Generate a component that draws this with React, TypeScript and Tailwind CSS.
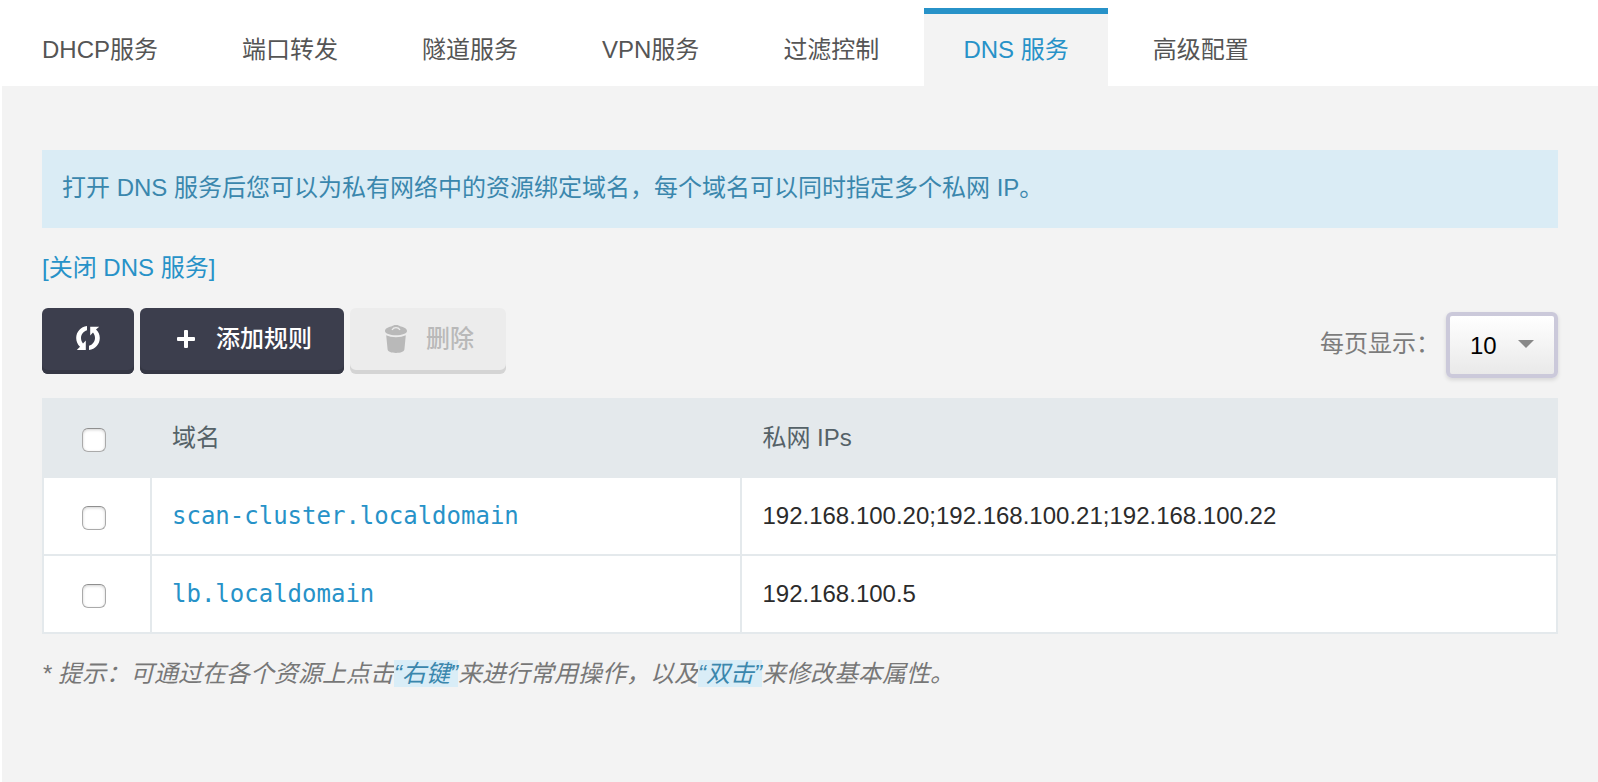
import { useState } from 'react';

interface DnsRule {
  id: string;
  domain: string;
  ips: string[];
}

const TABS = [
  { key: 'dhcp', label: 'DHCP服务' },
  { key: 'port', label: '端口转发' },
  { key: 'tunnel', label: '隧道服务' },
  { key: 'vpn', label: 'VPN服务' },
  { key: 'filter', label: '过滤控制' },
  { key: 'dns', label: 'DNS 服务' },
  { key: 'advanced', label: '高级配置' },
];

const RULES: DnsRule[] = [
  { id: 'scan', domain: 'scan-cluster.localdomain', ips: ['192.168.100.20', '192.168.100.21', '192.168.100.22'] },
  { id: 'lb', domain: 'lb.localdomain', ips: ['192.168.100.5'] },
];

function RefreshIcon() {
  return (
    <svg viewBox="0 0 24 24" className="w-6 h-6" fill="currentColor" aria-hidden="true">
      <path d="M11 0v4.200C7.400 5.200 5 8.500 5 12c0 2.200.8 4 2 5.500L9.800 14.500V24H.8l3.200-3.300C1.600 18.500.2 15.500.2 12 .2 5.800 4.800.8 11 0z" />
      <path d="M13 24v-4.200c3.600-1 6-4.300 6-7.800 0-2.200-.8-4-2-5.500l-2.800 3V.8h9L20 3.500c2.400 2.200 3.800 5 3.800 8.500 0 6.200-4.600 11.200-10.800 12z" />
    </svg>
  );
}

function PlusIcon() {
  return (
    <svg viewBox="0 0 18 18" className="w-[18px] h-[18px]" fill="currentColor" aria-hidden="true">
      <path d="M7 1a1 1 0 0 1 1-1h2a1 1 0 0 1 1 1v6h6a1 1 0 0 1 1 1v2a1 1 0 0 1-1 1h-6v6a1 1 0 0 1-1 1H8a1 1 0 0 1-1-1v-6H1a1 1 0 0 1-1-1V8a1 1 0 0 1 1-1h6z" />
    </svg>
  );
}

function TrashIcon() {
  return (
    <svg viewBox="0 0 22 28" className="w-[22px] h-7" fill="currentColor" aria-hidden="true">
      <path d="M0 6C0 4 2.500 2.300 6.200 1.600 7.500.5 9 0 11 0s3.500.5 4.800 1.600C19.500 2.300 22 4 22 6c0 2.600-5 4.200-11 4.200S0 8.600 0 6z" />
      <path d="M7 4.800C8 3.300 9.300 2.600 11 2.600s3 .7 4 2.200" fill="none" stroke="#ececec" strokeWidth="1.300" />
      <path d="M1.200 10.200c5 2.600 14.600 2.600 19.600 0L19.400 24.600c-.3 2.200-3.800 3.400-8.400 3.400s-8.100-1.200-8.400-3.400z" />
    </svg>
  );
}

const checkboxClass =
  'block mx-auto mt-1 w-6 h-6 appearance-none rounded-md border border-[#aaaaaa] border-t-[#8f8f8f] bg-white shadow-[inset_0_1px_3px_rgba(0,0,0,0.18)] checked:bg-[#2792c8]';

export default function App() {
  const [activeTab, setActiveTab] = useState('dns');
  const [selected, setSelected] = useState<string[]>([]);
  const [pageSize, setPageSize] = useState('10');

  const toggle = (id: string) => {
    setSelected(selected.includes(id) ? selected.filter((s) => s !== id) : [...selected, id]);
  };

  return (
    <div className="min-h-screen flex flex-col bg-white pl-0.5 text-2xl font-['Liberation_Sans','Noto_Sans_CJK_SC',sans-serif]">
      <nav className="flex gap-1.5 pt-2 pl-px">
        {TABS.map((tab) => (
          <button
            key={tab.key}
            type="button"
            onClick={() => setActiveTab(tab.key)}
            className={`px-[39px] border-t-[6px] leading-[72px] whitespace-nowrap ${
              activeTab === tab.key
                ? 'border-[#2792c8] bg-[#f3f3f3] text-[#2792c8]'
                : 'border-transparent text-[#555555]'
            }`}
          >
            {tab.label}
          </button>
        ))}
      </nav>

      <main className="flex-1 bg-[#f3f3f3] px-10 pt-16 pb-10">
        <p className="bg-[#daecf5] px-5 pt-[18px] pb-5 leading-10 text-[#3a87ad]">
          打开 DNS 服务后您可以为私有网络中的资源绑定域名，每个域名可以同时指定多个私网 IP。
        </p>

        <div className="my-5 leading-10">
          <a href="#close" className="text-[#2792c8]">[关闭 DNS 服务]</a>
        </div>

        {/* Toolbar */}
        <div className="flex justify-between items-start mb-5">
          <div className="flex gap-1.5 leading-8">
            <button
              type="button"
              aria-label="刷新"
              className="flex items-center justify-center w-[92px] h-[66px] pb-1.5 rounded-md bg-[#3c3e4d] text-white shadow-[inset_0_-4px_0_#353744]"
            >
              <RefreshIcon />
            </button>
            <button
              type="button"
              className="flex items-center gap-4 h-[66px] px-8 pb-1 rounded-md bg-[#3c3e4d] text-white font-medium shadow-[inset_0_-4px_0_#353744]"
            >
              <span className="flex justify-center w-7"><PlusIcon /></span>
              添加规则
            </button>
            <button
              type="button"
              disabled
              className="flex items-center gap-4 h-[66px] px-8 pb-1 rounded-md bg-[#ececec] text-[#b9b9b9] font-medium shadow-[inset_0_-4px_0_#d4d4d4]"
            >
              <span className="flex justify-center w-7"><TrashIcon /></span>
              删除
            </button>
          </div>

          <div className="flex items-center mt-1">
            <label htmlFor="page-size" className="mr-1.5 pb-0.5 text-[#7c7c7c]">每页显示：</label>
            <div className="relative">
              <select
                id="page-size"
                value={pageSize}
                onChange={(e) => setPageSize(e.target.value)}
                className="block w-28 h-[66px] pl-5 pt-0.5 appearance-none rounded-md border-4 border-[#cbc9da] bg-linear-to-b from-white to-[#e9e9e9] text-black shadow-[0_2px_4px_rgba(0,0,0,0.12)]"
              >
                <option value="10">10</option>
                <option value="20">20</option>
                <option value="50">50</option>
              </select>
              <svg viewBox="0 0 16 8" className="absolute right-6 top-7 w-4 h-2 pointer-events-none" fill="#888888" aria-hidden="true">
                <path d="M0 0h16L8 8z" />
              </svg>
            </div>
          </div>
        </div>

        {/* DNS rules */}
        <table className="w-full table-fixed border-separate border-spacing-0 border-l-2 border-[#e4e9ec] bg-white text-left">
          <thead>
            <tr className="h-20 bg-[#e4e9ec] text-[#556268]">
              <th className="w-[108px] p-0 pr-2">
                <input
                  type="checkbox"
                  aria-label="全选"
                  className={checkboxClass}
                  checked={selected.length === RULES.length}
                  onChange={() => setSelected(selected.length === RULES.length ? [] : RULES.map((r) => r.id))}
                />
              </th>
              <th className="w-[39%] px-5 py-0 font-normal">域名</th>
              <th className="px-5 py-0 font-normal">私网 IPs</th>
            </tr>
          </thead>
          <tbody>
            {RULES.map((rule) => (
              <tr key={rule.id} className="h-[78px]">
                <td className="p-0 pr-1.5 border-r-2 border-b-2 border-[#e4e9ec]">
                  <input
                    type="checkbox"
                    aria-label={rule.domain}
                    className={checkboxClass}
                    checked={selected.includes(rule.id)}
                    onChange={() => toggle(rule.id)}
                  />
                </td>
                <td className="px-5 py-0 border-r-2 border-b-2 border-[#e4e9ec]">
                  <a href={`#${rule.id}`} className="text-[#2792c8] font-['DejaVu_Sans_Mono',monospace]">{rule.domain}</a>
                </td>
                <td className="px-5 py-0 border-r-2 border-b-2 border-[#e4e9ec] text-[#2b2b2b]">{rule.ips.join(';')}</td>
              </tr>
            ))}
          </tbody>
        </table>

        <p className="mt-5 leading-10 italic text-[#777777]">
          * 提示：可通过在各个资源上点击
          <span className="bg-[#d9edf7] text-[#3a87ad]">“右键”</span>
          来进行常用操作，以及
          <span className="bg-[#d9edf7] text-[#3a87ad]">“双击”</span>
          来修改基本属性。
        </p>
      </main>
    </div>
  );
}
